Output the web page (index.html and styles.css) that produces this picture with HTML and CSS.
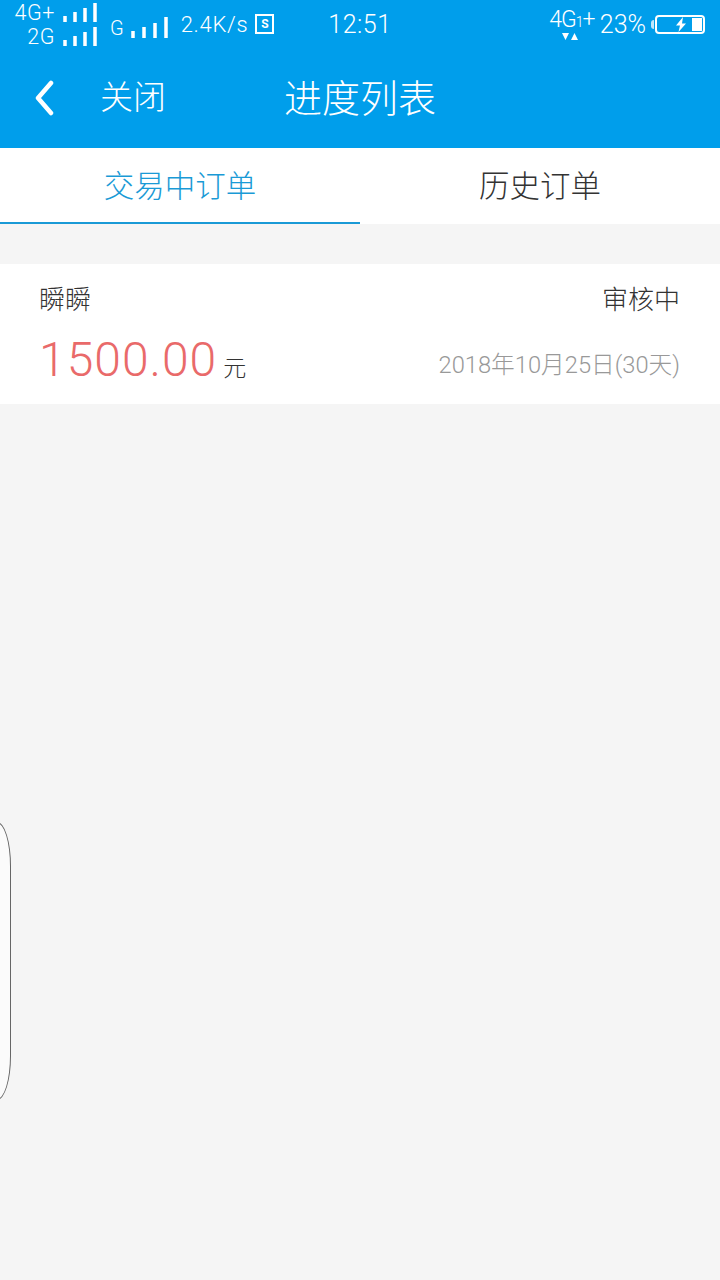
FILE: index.html
```html
<!DOCTYPE html>
<html lang="zh">
  <head>
    <meta charset="utf-8" />
    <meta name="viewport" content="width=device-width,initial-scale=1.0" />
    <title>进度列表</title>
    <link rel="stylesheet" href="styles.css">
  </head>

  <body>
    <!-- Status bar + title -->
    <header class="top">
      <div class="status">
        <div class="sims">
          <div class="sim-row">
            <span>4G+</span>
            <svg class="bars" width="35" height="20" viewBox="0 0 35 20"><path d="M2 14v6M12 10v10M22 6v14M32 1v19" /></svg>
          </div>
          <div class="sim-row">
            <span>2G</span>
            <svg class="bars" width="35" height="20" viewBox="0 0 35 20"><path d="M2 14v6M12 10v10M22 6v14M32 1v19" /></svg>
          </div>
        </div>
        <span class="g">G</span>
        <svg class="bars bars-g" width="38" height="22" viewBox="0 0 38 22"><path d="M2 15v7M13 11v11M24 7v15M35 1v21" /></svg>
        <span class="speed">2.4K/s</span>
        <span class="s-icon">S</span>
        <span class="clock">12:51</span>
        <div class="status-right">
          <div class="net">
            <span class="net-text">4G<small>1</small>+</span>
            <svg class="net-arrows" width="16" height="7" viewBox="0 0 16 7"><path d="M0 0h7L3.500 7zM9 7h7l-3.500-7z" /></svg>
          </div>
          <span class="pct">23%</span>
          <div class="battery">
            <svg width="10" height="15" viewBox="0 0 10 15"><path d="M7 0 0 8.500h4L2.500 15 10 6.500H6z" /></svg>
            <i class="battery-level"></i>
          </div>
        </div>
      </div>
      <nav class="nav">
        <svg class="back" width="22" height="36" viewBox="0 0 22 36"><path d="M18 3 5 18l13 15" /></svg>
        <span class="close">关闭</span>
        <span class="title">进度列表</span>
      </nav>
    </header>

    <!-- Tabs -->
    <div class="tabs">
      <div class="tab active">交易中订单</div>
      <div class="tab">历史订单</div>
    </div>

    <!-- Orders -->
    <section class="order">
      <div class="order-row">
        <span class="name">瞬瞬</span>
        <span class="state">审核中</span>
      </div>
      <div class="order-row order-row-low">
        <span class="amount"><b>1500.00</b> <em>元</em></span>
        <span class="date">2018年10月25日(30天)</span>
      </div>
    </section>

    <div class="side-handle"></div>
  </body>
</html>
```

FILE: styles.css
```css
html,
body {
  height: 100%;
}
body {
  margin: 0;
  background: #f5f5f5;
  color: #333333;
  font-family: "Helvetica Neue", Roboto, "Noto Sans CJK SC", sans-serif;
  overflow: hidden;
}

/* header */
.top {
  height: 148px;
  background: #009eeb;
  color: #ffffff;
}
.status {
  height: 48px;
  display: flex;
  align-items: center;
  padding-left: 14px;
  box-sizing: border-box;
}
.sims {
  width: 84px;
  font-size: 21.500px;
  font-weight: 300;
  padding-top: 1px;
}
.sim-row {
  display: flex;
  justify-content: flex-end;
  align-items: flex-end;
  gap: 8px;
  height: 24px;
  line-height: 24px;
  letter-spacing: 0.6px;
}
.sims .bars {
  margin-bottom: 3px;
}
.bars {
  stroke: #ffffff;
  stroke-width: 3.500;
  fill: none;
  flex: none;
}
.g {
  font-size: 20px;
  font-weight: 300;
  margin-left: 12px;
  margin-top: 8px;
}
.bars-g {
  margin-left: 7px;
  margin-top: 6px;
}
.speed {
  font-size: 22px;
  font-weight: 300;
  margin-left: 12px;
  letter-spacing: 0.7px;
}
.s-icon {
  width: 15px;
  height: 16px;
  border: 2px solid #ffffff;
  margin-left: 7px;
  font-size: 12px;
  font-weight: 700;
  line-height: 16px;
  text-align: center;
}
.clock {
  font-size: 25px;
  font-weight: 300;
  margin-left: 54px;
  letter-spacing: 0.5px;
}
.status-right {
  margin-left: auto;
  margin-right: 15px;
  display: flex;
  align-items: center;
}
.net {
  display: flex;
  flex-direction: column;
  align-items: center;
  width: 46px;
}
.net-text {
  font-size: 23px;
  font-weight: 300;
  line-height: 22px;
  letter-spacing: -1px;
}
.net-text small {
  font-size: 14px;
}
.net-arrows {
  fill: #ffffff;
  margin-left: -3px;
}
.pct {
  font-size: 25px;
  font-weight: 300;
  margin-left: 5px;
}
.battery {
  width: 46px;
  height: 15px;
  border: 2px solid #ffffff;
  border-radius: 4px;
  margin-left: 9px;
  display: flex;
  align-items: center;
  justify-content: flex-end;
  fill: #ffffff;
  position: relative;
}
/* charging notch, sits on the battery's left edge */
.battery::before {
  content: "";
  position: absolute;
  left: -6px;
  top: 3px;
  width: 3px;
  height: 9px;
  background: #bfe6fa;
  border-radius: 3px 0 0 3px;
}
.battery svg {
  margin-right: 6px;
}
.battery-level {
  width: 10px;
  height: 13px;
  margin-right: 1px;
  background: #ffffff;
}

.nav {
  height: 100px;
  display: flex;
  align-items: center;
  padding-left: 33px;
  box-sizing: border-box;
}
.back {
  stroke: #ffffff;
  stroke-width: 4.500;
  stroke-linecap: round;
  stroke-linejoin: round;
  fill: none;
}
.close {
  font-size: 33px;
  line-height: 40px;
  margin-left: 45px;
  margin-top: -1px;
  font-weight: 300;
}
.title {
  font-size: 38px;
  line-height: 40px;
  margin-left: 118px;
  margin-top: 2px;
  font-weight: 300;
}

/* tabs */
.tabs {
  display: flex;
  height: 76px;
  background: #ffffff;
}
.tab {
  flex: 1;
  box-sizing: border-box;
  padding-top: 2px;
  text-align: center;
  font-size: 30.500px;
  font-weight: 300;
  line-height: 74px;
  color: #333333;
}
.tab.active {
  color: #1a9ad6;
  border-bottom: 2px solid #1a9ad6;
}

/* order card */
.order {
  margin-top: 40px;
  height: 140px;
  background: #ffffff;
  padding: 0 40px;
  box-sizing: border-box;
}
.order-row {
  display: flex;
  justify-content: space-between;
  align-items: center;
  height: 66px;
}
.order-row-low {
  height: 62px;
}
.name {
  font-size: 26px;
  font-weight: 300;
  margin-left: -1px;
}
.state {
  font-size: 26px;
  font-weight: 300;
}
.amount {
  line-height: 50px;
  margin-top: 8px;
}
.amount b {
  font-size: 48px;
  font-weight: 300;
  color: #e96a6a;
  letter-spacing: 1px;
  margin-left: -1px;
}
.amount em {
  font-style: normal;
  font-size: 23px;
  font-weight: 300;
  margin-left: 2px;
}
.date {
  font-size: 23.700px;
  font-weight: 300;
  color: #999999;
  margin-top: 4px;
}

/* floating handle on the left edge */
.side-handle {
  position: absolute;
  left: -30px;
  top: 822px;
  width: 39px;
  height: 276px;
  background: #fbfbfb;
  border: 1px solid #666666;
  border-radius: 14px / 44px;
}
```
